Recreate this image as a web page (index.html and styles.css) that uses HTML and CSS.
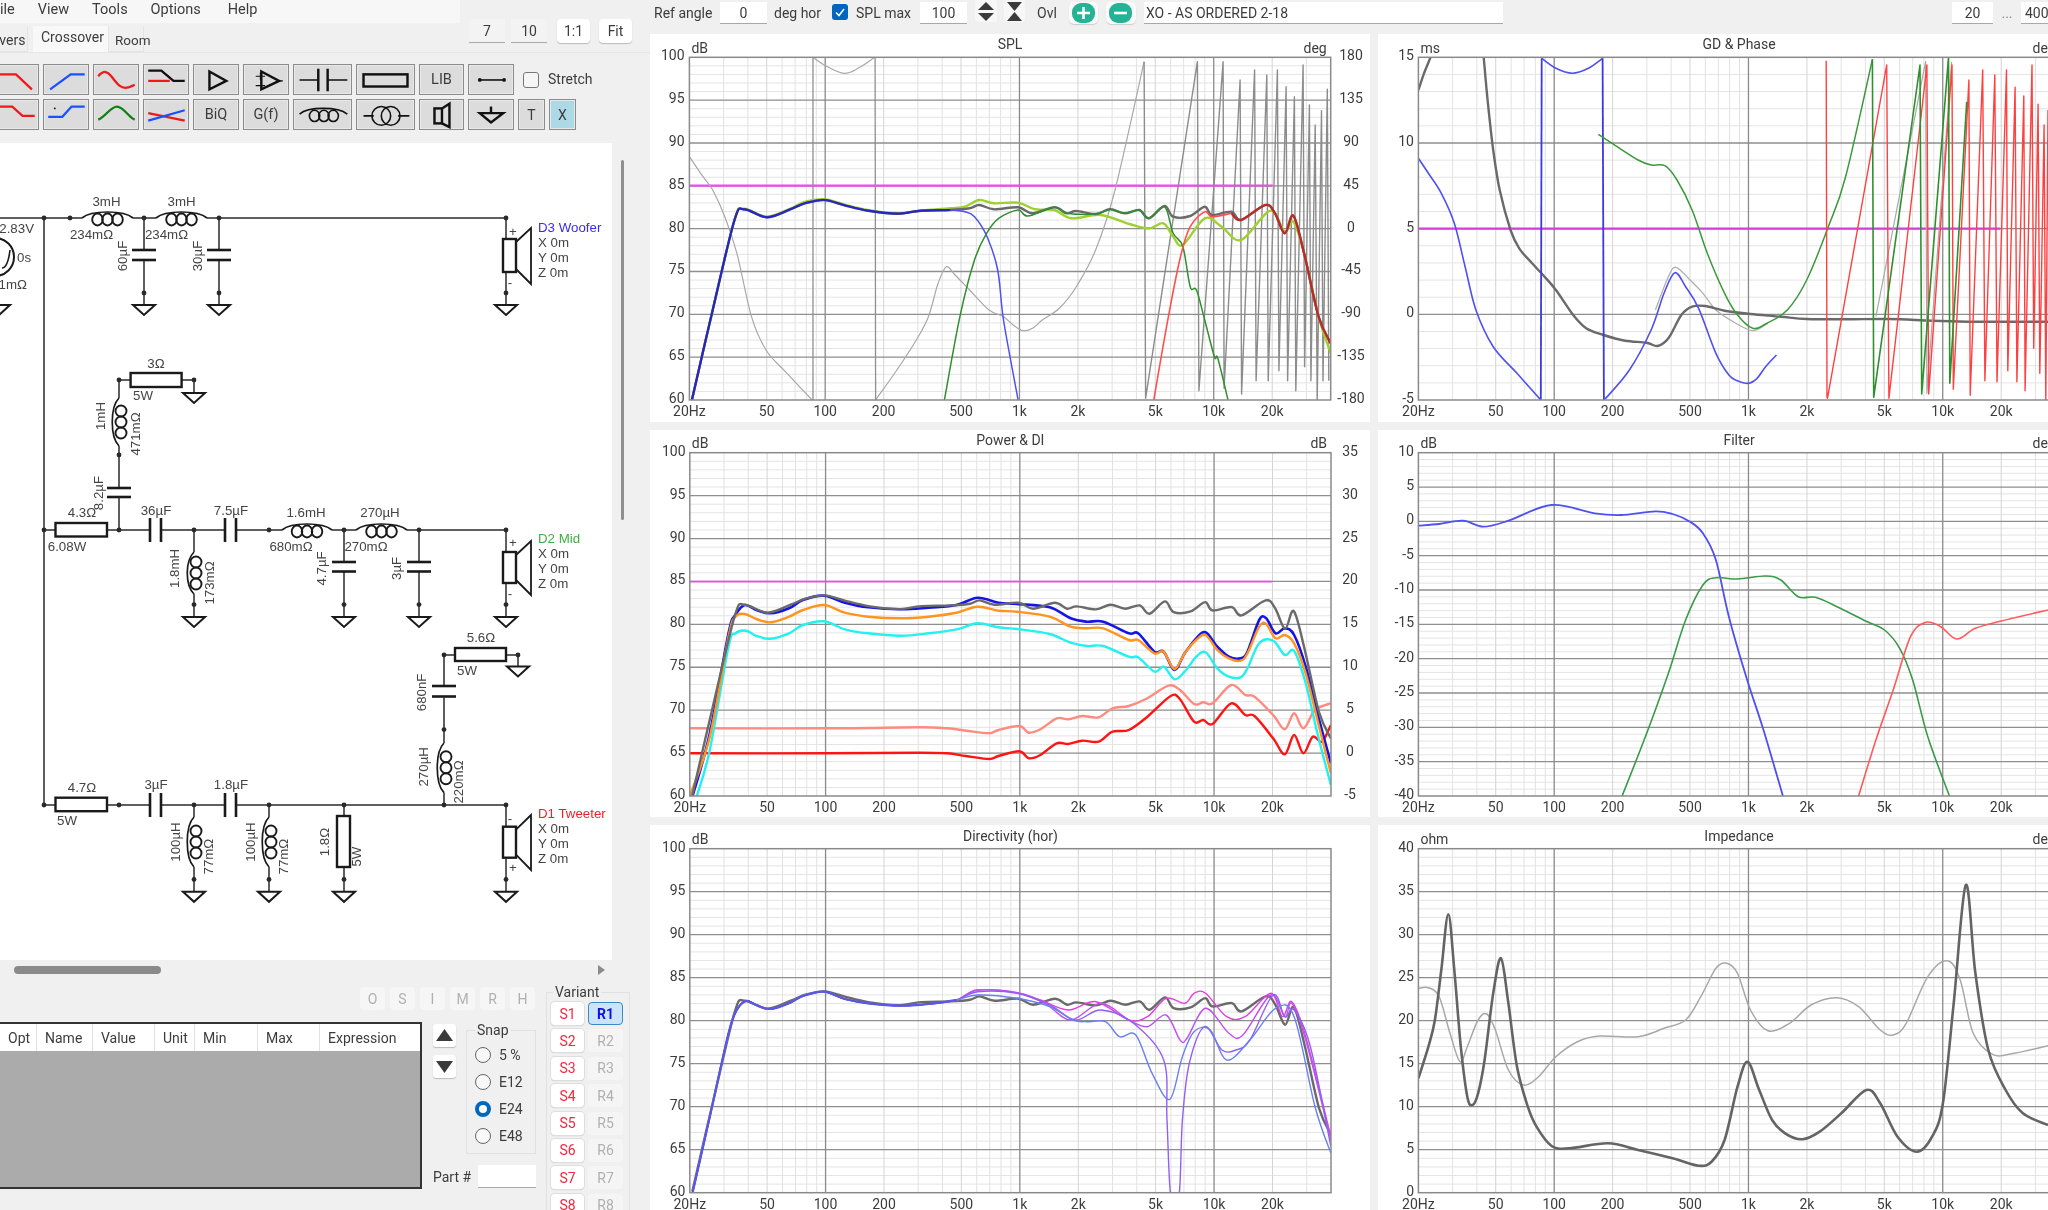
FILE: index.html
```html
<!DOCTYPE html>
<html lang="en">
<head>
<meta charset="utf-8">
<title>VituixCAD</title>
<link rel="stylesheet" href="styles.css">
</head>
<body>
<div class="app">
  <aside class="left">
    <header class="head">
      <div class="head-main">
        <nav class="menu"><span>File</span><span>View</span><span>Tools</span><span>Options</span><span>Help</span></nav>
        <div class="tabs"><span class="tab tab-drivers">Drivers</span><span class="tab tab-active">Crossover</span><span class="tab">Room</span></div>
      </div>
      <div class="zoom-btns">
        <span class="field zoom-field">7</span><span class="field zoom-field">10</span>
        <span class="zoom-btn">1:1</span><span class="zoom-btn">Fit</span>
      </div>
    </header>

    <div class="toolbar">
      <div class="tool-row">
        <button class="tool"><svg viewBox="0 0 46 31"><polyline class="ico red" points="3,10 23,10 40,26"/></svg></button>
        <button class="tool"><svg viewBox="0 0 46 31"><polyline class="ico blue" points="6,26 28,10 43,10"/></svg></button>
        <button class="tool"><svg viewBox="0 0 46 31"><path class="ico red" d="M4,12C10,5 14,7 18,12C24,20 28,26 36,24C39,23 41,22 43,21"/></svg></button>
        <button class="tool"><svg viewBox="0 0 46 31"><polyline class="ico blk" points="4,6 18,6 31,17 43,17"/><line class="ico red" x1="4" y1="17" x2="27" y2="17"/></svg></button>
        <button class="tool"><svg viewBox="0 0 46 31"><polygon class="ico blk" points="16,7 16,26 34,17"/></svg></button>
        <button class="tool"><svg viewBox="0 0 46 31"><polygon class="ico blk" points="18,7 18,26 37,17"/><path class="ico thin" d="M12,12H22M17,8V16M12,22H22M37,17H41"/></svg></button>
        <button class="tool tool-wide"><svg viewBox="0 0 59 31"><path class="ico blk-t" d="M5,16H25M35,16H56"/><path class="ico blk" d="M25,4V28M35,4V28"/></svg></button>
        <button class="tool tool-wide"><svg viewBox="0 0 59 31"><rect class="ico blk" x="6" y="10" width="47" height="13"/></svg></button>
        <button class="tool tool-text">LIB</button>
        <button class="tool"><svg viewBox="0 0 46 31"><path class="ico blk-t" d="M11,16H37"/><circle class="fill-blk" cx="11" cy="16" r="2"/><circle class="fill-blk" cx="37" cy="16" r="2"/></svg></button>
        <span class="check"></span><span class="stretch">Stretch</span>
      </div>
      <div class="tool-row">
        <button class="tool"><svg viewBox="0 0 46 31"><polyline class="ico red" points="3,7 19,7 30,17 43,17"/></svg></button>
        <button class="tool"><svg viewBox="0 0 46 31"><polyline class="ico blue" points="4,18 19,18 29,7 43,7"/><circle class="fill-blk" cx="11" cy="9" r="1"/></svg></button>
        <button class="tool"><svg viewBox="0 0 46 31"><path class="ico green" d="M4,21C12,18 17,7 24,7C31,7 36,18 43,21"/></svg></button>
        <button class="tool"><svg viewBox="0 0 46 31"><line class="ico red" x1="4" y1="14" x2="43" y2="22"/><line class="ico blue" x1="4" y1="22" x2="43" y2="11"/></svg></button>
        <button class="tool tool-text">BiQ</button>
        <button class="tool tool-text">G(f)</button>
        <button class="tool tool-wide"><svg viewBox="0 0 59 31"><path class="ico blk-t" d="M5,15C14,7 46,7 56,15"/><ellipse class="ico blk-t" cx="21" cy="17" rx="5.5" ry="6"/><ellipse class="ico blk-t" cx="31" cy="17" rx="5.5" ry="6"/><ellipse class="ico blk-t" cx="41" cy="17" rx="5.5" ry="6"/></svg></button>
        <button class="tool tool-wide"><svg viewBox="0 0 59 31"><path class="ico blk-t" d="M6,17H17M43,17H55"/><circle class="ico blk-t" cx="25" cy="17" r="10"/><circle class="ico blk-t" cx="35" cy="17" r="10"/></svg></button>
        <button class="tool"><svg viewBox="0 0 45 31"><rect class="ico blk" x="15" y="9" width="8" height="16"/><polyline class="ico blk" points="23,9 31,4 31,29 23,25"/></svg></button>
        <button class="tool"><svg viewBox="0 0 46 31"><path class="ico blk" d="M23,7V14"/><polygon class="ico blk" points="11,14 36,14 23,24"/></svg></button>
        <button class="tool tool-t">T</button>
        <button class="tool tool-t tool-x">X</button>
      </div>
    </div>

    <div class="schem-row">
      <div class="schem" id="schem"></div>
      <div class="vscroll"><span class="vthumb"></span></div>
    </div>
    <div class="hscroll"><span class="hthumb"></span><span class="harrow"></span></div>

    <div class="bottom">
      <div class="bottom-main">
        <div class="flags"><span>O</span><span>S</span><span>I</span><span>M</span><span>R</span><span>H</span></div>
        <div class="edit-row">
          <div class="table">
            <div class="thead">
              <span class="c-opt">Opt</span><span class="c-name">Name</span><span class="c-val">Value</span><span class="c-unit">Unit</span><span class="c-min">Min</span><span class="c-max">Max</span><span class="c-exp">Expression</span>
            </div>
          </div>
          <div class="side">
            <div class="side-top">
              <div class="arrows">
                <span class="arrow-btn"><svg viewBox="0 0 23 23"><polygon class="fill-dark" points="11.5,5 20,17 3,17"/></svg></span>
                <span class="arrow-btn"><svg viewBox="0 0 23 23"><polygon class="fill-dark" points="3,6 20,6 11.5,18"/></svg></span>
              </div>
              <fieldset class="snap">
                <legend>Snap</legend>
                <div class="radio"><i></i>5 %</div>
                <div class="radio"><i></i>E12</div>
                <div class="radio on"><i></i>E24</div>
                <div class="radio"><i></i>E48</div>
              </fieldset>
            </div>
            <div class="part"><span class="part-label">Part #</span><span class="field part-field"></span></div>
          </div>
        </div>
      </div>
      <fieldset class="variant">
        <legend>Variant</legend>
        <div class="var-grid">
          <span class="vs">S1</span><span class="vr vr-on">R1</span>
          <span class="vs">S2</span><span class="vr">R2</span>
          <span class="vs">S3</span><span class="vr">R3</span>
          <span class="vs">S4</span><span class="vr">R4</span>
          <span class="vs">S5</span><span class="vr">R5</span>
          <span class="vs">S6</span><span class="vr">R6</span>
          <span class="vs">S7</span><span class="vr">R7</span>
          <span class="vs">S8</span><span class="vr">R8</span>
        </div>
      </fieldset>
    </div>
  </aside>

  <main class="right">
    <div class="topbar">
      <span class="t-ref">Ref angle</span>
      <span class="field t-num">0</span>
      <span class="t-deg">deg hor</span>
      <span class="tick"><svg viewBox="0 0 16 16"><path class="tick-mark" d="M4,8.5L7,11.5L12,5"/></svg></span>
      <span class="t-spl">SPL max</span>
      <span class="field t-num t-num2">100</span>
      <span class="spin"><svg viewBox="0 0 22 23"><polygon class="fill-dark" points="11,2 19,10 3,10"/><polygon class="fill-dark" points="3,13 19,13 11,21"/></svg></span>
      <span class="spin spin2"><svg viewBox="0 0 21 23"><polygon class="fill-dark" points="3,2 18,2 10.5,11"/><polygon class="fill-dark" points="10.5,12 18,21 3,21"/></svg></span>
      <span class="t-ovl">Ovl</span>
      <span class="round-btn"><svg viewBox="0 0 29 22"><rect class="fill-teal" x="3" y="1" width="23" height="20" rx="9"/><path class="round-mark" d="M14.5,5V17M8,11H21"/></svg></span>
      <span class="round-btn round-btn2"><svg viewBox="0 0 29 22"><rect class="fill-teal" x="3" y="1" width="23" height="20" rx="9"/><path class="round-mark" d="M8,11H21"/></svg></span>
      <span class="field t-name">XO - AS ORDERED 2-18</span>
      <span class="field t-from">20</span>
      <span class="t-dots">...</span>
      <span class="field t-to">400</span>
    </div>
    <div class="charts">
      <section class="panel" id="spl"></section>
      <section class="panel" id="gd"></section>
      <section class="panel" id="power"></section>
      <section class="panel" id="filter"></section>
      <section class="panel" id="dir"></section>
      <section class="panel" id="imp"></section>
    </div>
  </main>
</div>
<script src="script.js"></script>
</body>
</html>
```
FILE: styles.css
```css
* { box-sizing: border-box; }
html, body { margin: 0; padding: 0; background: #f0f0f0; }
.app {
  display: flex; width: 2048px; height: 1210px; overflow: hidden;
  background: #f0f0f0; color: #3c3c3c;
  font: 14px Roboto, "Liberation Sans", sans-serif;
  filter: blur(0.45px);
}
.field { background: #fff; border-bottom: 1.5px solid #a8a8a8; display: flex; align-items: center; justify-content: center; }

/* left column */
.left { width: 650px; flex: none; display: flex; flex-direction: column; overflow: hidden; }
.head { display: flex; height: 52px; }
.head-main { width: 460px; flex: none; }
.menu { height: 23px; background: #f7f7f7; display: flex; gap: 23px; margin-left: -8px; padding-top: 1px; font-size: 14.5px; overflow: visible; }
.menu span:last-child { margin-left: 4px; }
.tabs { display: flex; height: 29px; padding-top: 4px; align-items: stretch; margin-left: -23px; }
.tab { padding: 5px 6px 0; background: #f0f0f0; border-right: 1px solid #e4e4e4; }
.tab-drivers { width: 51px; padding-left: 5px; border-bottom: 1px solid #e4e4e4; }
.tab-active { background: #f8f8f8; width: 76px; margin-left: 5px; margin-top: -1px; padding: 3px 0 0 8px; }
.tabs .tab:last-child { width: 35px; padding-left: 6px; padding-right: 0; padding-top: 5px; font-size: 13.5px; border-bottom: 1px solid #e4e4e4; }
.zoom-btns { display: flex; padding-top: 19px; margin-left: 9px; height: 43px; }
.zoom-field { width: 36px; height: 24px; margin-right: 6px; background: #f3f3f3; }
.zoom-btn { width: 33px; height: 24px; margin-left: 4px; margin-right: 5px; background: #fff; border-radius: 4px; box-shadow: 0 1px 1px #bbb; display: flex; align-items: center; justify-content: center; }

.toolbar { height: 91px; padding-top: 11px; margin-left: -7px; display: flex; flex-direction: column; gap: 4px; border-top: 1px solid #e6e6e6; }
.tool-row { display: flex; gap: 4px; height: 31px; }
.tool { width: 46px; height: 31px; padding: 0; margin: 0; background: #dcdcdc; border: 1px solid #8c8c8c; box-shadow: inset 0 0 0 1px #e8e8e8; font: inherit; color: #3c3c3c; display: flex; align-items: center; justify-content: center; flex: none; }
.tool svg { width: 100%; height: 100%; display: block; }
.tool-wide { width: 59px; }
.tool-row .tool:nth-child(9) { width: 45px; }
.tool-text { font-size: 14.5px; }
.tool-t { width: 27px; }
.tool-x { background: #add8e6; }
.ico { fill: none; stroke-width: 2.4; }
.red { stroke: #f01818; }
.blue { stroke: #1a50ff; }
.green { stroke: #108010; }
.blk { stroke: #111; stroke-width: 2.6; }
.blk-t { stroke: #111; stroke-width: 1.7; }
.thin { stroke: #111; stroke-width: 1.2; }
.fill-blk { fill: #111; }
.fill-dark { fill: #3a3a3a; }
.fill-teal { fill: #24b394; }
.check { width: 16px; height: 16px; border: 1px solid #777; border-radius: 3px; background: #f6f6f6; margin: 8px 0 0 5px; flex: none; }
.stretch { margin: 7px 0 0 5px; }

.schem-row { display: flex; height: 817px; }
.schem { width: 612px; height: 817px; background: #fff; flex: none; overflow: hidden; }
.schem svg { display: block; width: 612px; height: 817px; }
.vscroll { width: 38px; padding: 17px 0 0 8.5px; }
.vthumb { display: block; width: 3px; height: 360px; background: #8f8f8f; border-radius: 2px; }
.hscroll { height: 27px; display: flex; align-items: flex-start; padding: 6px 0 0 13.5px; }
.hthumb { width: 147px; height: 8px; background: #8a8a8a; border-radius: 4px; }
.harrow { width: 0; height: 0; margin: -1px 0 0 437px; border-left: 7px solid #8a8a8a; border-top: 5.5px solid transparent; border-bottom: 5.5px solid transparent; }

.bottom { display: flex; height: 223px; }
.bottom-main { width: 546px; flex: none; }
.flags { display: flex; justify-content: flex-end; gap: 5px; padding-right: 11px; height: 23px; }
.flags span { width: 25px; height: 23px; background: #f6f6f6; border-radius: 4px; color: #b0b0b0; display: flex; align-items: center; justify-content: center; }
.edit-row { display: flex; margin-top: 12px; }
.table { width: 424px; height: 167px; margin-left: -2px; flex: none; border: 2px solid #333; background: #ababab; }
.thead { display: flex; height: 27px; background: #fff; align-items: center; }
.thead span { padding-left: 8px; border-right: 1px solid #e2e2e2; height: 100%; display: flex; align-items: center; }
.c-opt { width: 37px; }
.c-name { width: 56px; }
.c-val { width: 62px; }
.c-unit { width: 40px; }
.c-min { width: 63px; }
.c-max { width: 62px; }
.thead .c-exp { flex: 1; border-right: 0; }
.side { margin-left: 11px; width: 103px; flex: none; }
.side-top { display: flex; height: 132px; }
.arrows { width: 23px; padding-top: 2px; display: flex; flex-direction: column; gap: 8px; flex: none; }
.arrow-btn { width: 23px; height: 23px; background: #fff; border-radius: 3px; box-shadow: 0 1px 1px #bbb; display: block; }
.arrow-btn svg { display: block; }
.snap { margin: 1px 0 0 10px; padding: 0; width: 71px; height: 131px; border: 1px solid #e0e0e0; position: relative; min-width: 0; }
legend { padding: 0 2px; margin-left: 8px; line-height: 14px; }
.variant legend { margin-left: 2px; }
.radio { height: 27px; display: flex; align-items: center; padding-left: 8px; gap: 8px; }
.radio:first-of-type { margin-top: 4px; }
.radio i { width: 16px; height: 16px; border: 1.5px solid #666; border-radius: 50%; background: #f8f8f8; flex: none; }
.radio.on i { border: 4.5px solid #0067c0; background: #fff; }
.part { display: flex; align-items: center; margin-top: 11px; }
.part-label { width: 37px; flex: none; white-space: nowrap; }
.part-field { width: 58px; height: 23px; margin-left: 8px; flex: none; }
.variant { width: 84px; height: 240px; margin: 0; padding: 0 0 0 4px; border: 1px solid #e0e0e0; min-width: 0; flex: none; margin-top: -2px; }
.var-grid { display: grid; grid-template-columns: 33px 35px; column-gap: 4px; row-gap: 4.4px; margin-top: 3px; }
.var-grid span { height: 23px; border-radius: 4px; display: flex; align-items: center; justify-content: center; }
.vs { background: #fff; color: #f02840; box-shadow: 0 0 0 1px #dedede, 0 1px 1px #bbb; }
.vr { background: #f5f5f5; color: #b0b0b0; }
.var-grid .vr-on { background: #cce4f7; color: #1010e0; border: 1.5px solid #3a8ac8; font-weight: 700; }

/* right column */
.right { flex: 1; min-width: 0; display: flex; flex-direction: column; overflow: hidden; }
.topbar { height: 34px; display: flex; align-items: flex-start; white-space: nowrap; flex: none; }
.topbar > span { height: 22px; display: flex; align-items: center; flex: none; margin-top: 2px; }
.t-ref { margin-left: 4px; width: 66px; }
.t-num { width: 47px; }
.t-num2 { margin-left: 8px; }
.t-deg { margin-left: 7px; width: 51px; }
.tick { margin-left: 7px; width: 16px; }
.tick svg { width: 16px; height: 16px; background: #0067c0; border-radius: 3px; margin-top: -3px; }
.tick-mark { fill: none; stroke: #fff; stroke-width: 1.5; }
.t-spl { margin-left: 8px; width: 56px; }
.spin { margin-left: 8px; width: 22px; background: #f7f7f7; border-radius: 3px; }
.spin svg { width: 100%; height: 23px; }
.topbar .spin { margin-top: 0; }
.spin2 { margin-left: 7px; width: 21px; }
.t-ovl { margin-left: 12px; width: 21px; }
.round-btn { margin-left: 11px; width: 29px; background: #fafafa; border-radius: 5px; box-shadow: 0 1px 1px #ccc; }
.round-btn svg { width: 29px; height: 22px; }
.round-btn2 { margin-left: 8px; width: 30px; }
.round-mark { fill: none; stroke: #fff; stroke-width: 2.6; }
.t-name { margin-left: 8px; width: 359px; justify-content: flex-start !important; padding-left: 2px; }
.t-from { margin-left: 449px; width: 41px; }
.t-dots { width: 28px; justify-content: center; color: #888; }
.t-to { width: 60px; justify-content: flex-start !important; padding-left: 4px; }

.charts { display: grid; grid-template-columns: 720px 720px; grid-template-rows: 388px 387px 385px; gap: 8px; }
.panel { background: #fff; }
.panel svg { display: block; width: 720px; height: 100%; }
.tx { font: 14px Roboto, "Liberation Sans", sans-serif; fill: #3c3c3c; }
.sch { font: 13.3px "Liberation Sans", Arial, sans-serif; fill: #444; }
.sch-d3 { fill: #3a2bf0; }
.sch-d2 { fill: #3cb043; }
.sch-d1 { fill: #f02030; }
```
FILE: script.js
```javascript
const NS = 'http://www.w3.org/2000/svg';
function el(p, tag, attrs, text) {
  const e = document.createElementNS(NS, tag);
  for (const k in attrs) e.setAttribute(k, attrs[k]);
  if (text !== undefined) e.textContent = text;
  p.appendChild(e);
  return e;
}
function smooth(p) {
  let d = 'M' + p[0][0].toFixed(1) + ',' + p[0][1].toFixed(1);
  for (let i = 0; i < p.length - 1; i++) {
    const a = p[Math.max(i - 1, 0)], b = p[i], c = p[i + 1], e = p[Math.min(i + 2, p.length - 1)];
    d += 'C' + (b[0] + (c[0] - a[0]) / 6).toFixed(1) + ',' + (b[1] + (c[1] - a[1]) / 6).toFixed(1) + ' '
      + (c[0] - (e[0] - b[0]) / 6).toFixed(1) + ',' + (c[1] - (e[1] - b[1]) / 6).toFixed(1) + ' '
      + c[0].toFixed(1) + ',' + c[1].toFixed(1);
  }
  return d;
}
function poly(p) { return 'M' + p.map(q => q[0].toFixed(1) + ',' + q[1].toFixed(1)).join('L'); }

/* ---------- curve data, as read off the reference ---------- */
const total = [[107,1200],[150,930],[195,660],[215,628],[262,652],[310,628],[340,610],[380,600],[420,615],[470,632],[530,641],[580,632],[640,630],[680,625],[700,615],[730,628],[780,622],[810,640],[855,622],[880,640],[900,633],[940,642],[970,628],[1000,640],[1030,630],[1050,655],[1082,618],[1100,650],[1135,648],[1165,620],[1180,645],[1220,635],[1240,660],[1290,615],[1310,640],[1330,700],[1348,647],[1370,760],[1400,950],[1425,1030]];
const SPL = [2.063, 640, 0], GDZ = [2.3127, 1370, 0], POW = [2.148, 640, 420], FIL = [2.3127, 1370, 420], DIR = [2.148, 640, 820], IMP = [2.3127, 1370, 820];
const toPage = (z, pts) => pts.map(q => [z[1] + q[0] / z[0], z[2] + q[1] / 3]);
const totalPage = toPage(SPL, total);

const base = [[113,1118],[150,890],[190,640],[208,570],[228,543],[250,555],[280,567],[320,550],[350,528],[395,515],[440,537],[490,550],[560,557],[620,552],[680,540]];

const charts = {
  spl: { box: [650, 34, 720, 388], plot: [689.4, 57.3, 641.3, 342.7], z: SPL, title: 'SPL', lu: 'dB', ru: 'deg',
    left: [100,95,90,85,80,75,70,65,60], right: [180,135,90,45,0,-45,-90,-135,-180], labelEnd: 684.6, rightX: 1351,
    hline: { y: 557, x0: 102, x1: 1305, w: 2.2, c: '#f048f0' },
    curves: [
      { c: '#a8a8a8', w: 1.2, p: [[102,470],[130,530],[150,570],[175,650],[200,760],[230,950],[260,1050],[300,1115],[355,1200]] },
      { c: '#a8a8a8', w: 1.2, p: [[357,172],[380,195],[420,220],[450,205],[484,172]] },
      { c: '#a8a8a8', w: 1.2, p: [[486,1200],[530,1110],[570,1020],[595,950],[615,850],[632,800],[650,825],[680,870],[720,930],[750,950],[770,975],[790,992],[810,985],[830,960],[865,925],[900,860],[940,750],[980,570],[1040,185]] },
      { c: '#909090', w: 1.3, straight: 1, p: [[357,1200],[357,172]] },
      { c: '#909090', w: 1.3, straight: 1, p: [[485,172],[486,1200]] },
      { c: '#8c8c8c', w: 1.4, straight: 1, p: [[1040,185],[1043,1195],[1150,185],[1153,1172],[1203,185],[1205,1165],[1238,240],[1241,1182],[1268,210],[1271,1142],[1293,225],[1296,1142],[1315,210],[1318,1112],[1333,260],[1336,1142],[1350,290],[1353,1172],[1368,195],[1371,1100],[1381,315],[1384,1142],[1393,375],[1397,1200],[1406,332],[1409,1142],[1418,268],[1421,1142]] },
      { c: '#a0d030', w: 2.4, p: [[107,1200],[150,930],[195,660],[215,626],[262,650],[310,626],[340,606],[380,598],[420,613],[470,630],[530,640],[580,632],[640,625],[670,620],[700,600],[730,610],[780,608],[815,628],[855,630],[890,655],[950,645],[1010,672],[1050,685],[1080,670],[1100,710],[1120,735],[1165,655],[1200,680],[1240,720],[1300,632],[1330,695],[1348,665],[1370,760],[1400,950],[1425,1060]] },
      { page: totalPage, c: '#6a6a6a', w: 2.4 },
      { c: '#2f8f2f', w: 1.5, p: [[628,1200],[660,950],[690,780],[715,700],[740,655],[780,630],[800,648],[855,622],[880,640],[940,642],[970,628],[1000,640],[1030,630],[1050,655],[1082,620],[1100,700],[1120,740],[1135,860],[1148,870],[1165,960],[1185,1070],[1192,1075],[1213,1200]] },
      { c: '#ff5050', w: 1.6, p: [[1060,1200],[1090,950],[1115,770],[1135,680],[1165,635],[1180,650],[1220,640]] },
      { c: '#c02828', w: 2.2, p: [[1220,640],[1240,660],[1290,615],[1310,640],[1330,700],[1348,647],[1370,760],[1400,950],[1425,1030]] },
      { c: '#5050f0', w: 1.5, p: [[640,630],[670,635],[690,650],[716,710],[738,810],[750,960],[780,1200]] },
      { c: '#2626c0', w: 2.2, p: [[107,1200],[150,930],[195,660],[215,628],[262,652],[310,628],[340,610],[380,600],[420,615],[470,632],[530,641],[580,632],[640,630]] }
    ] },
  gd: { box: [1378, 34, 720, 388], plot: [1418.4, 57.3, 641.3, 342.7], z: GDZ, title: 'GD & Phase', lu: 'ms', ru: 'deg',
    left: [15,10,5,0,-5], labelEnd: 1414,
    hline: { y: 686, x0: 112, x1: 1458, w: 2.4, c: '#d040d8' },
    curves: [
      { c: '#6a6a6a', w: 2.4, p: [[112,270],[125,220],[140,172]] },
      { c: '#b0b0b0', w: 1.3, p: [[660,930],[690,830],[708,802],[740,840],[770,880],[800,930],[840,965],[885,992],[920,970]] },
      { c: '#6a6a6a', w: 2.4, p: [[263,172],[272,300],[285,450],[300,570],[325,690],[345,745],[375,790],[400,825],[430,870],[470,945],[500,985],[540,1005],[590,1022],[640,1028],[665,1038],[690,1015],[720,945],[745,920],[775,918],[820,932],[880,942],[950,950],[1010,957],[1100,958],[1200,957],[1300,962],[1400,965],[1568,965]] },
      { c: '#5050f0', w: 1.6, p: [[112,475],[135,520],[165,580],[195,670],[220,800],[245,930],[285,1040],[340,1120],[395,1200]] },
      { c: '#3a3ae0', w: 1.8, straight: 1, p: [[395,1200],[397,175]] },
      { c: '#5050f0', w: 1.6, p: [[397,175],[430,205],[468,220],[505,205],[538,175]] },
      { c: '#3a3ae0', w: 1.8, straight: 1, p: [[538,175],[541,1200]] },
      { c: '#5050f0', w: 1.6, p: [[543,1198],[600,1110],[650,990],[680,880],[705,818],[730,860],[760,925],[800,1060],[830,1125],[850,1142],[875,1150],[895,1135],[915,1100],[940,1065]] },
      { c: '#3a9a3a', w: 1.5, p: [[528,403],[560,430],[620,480],[650,495],[682,497],[710,540],[745,630],[780,760],[820,880],[850,945],[885,985],[915,972],[965,930],[1010,840],[1060,680],[1100,530],[1162,178]] },
      { c: '#a8a8a8', w: 1.2, straight: 1, p: [[1170,950],[1285,185],[1288,1180],[1345,185]] },
      { c: '#ff4040', w: 1.4, straight: 1, p: [[1055,182],[1057,1192],[1058,1195],[1195,195],[1200,1195],[1288,195],[1292,1182],[1346,195],[1349,1168],[1385,240],[1388,1186],[1417,210],[1422,1142],[1445,225],[1450,1145],[1472,210],[1475,1112],[1492,262],[1496,1145],[1512,288],[1515,1172],[1531,195],[1535,1045],[1545,313],[1549,1120],[1559,375],[1563,1200],[1568,330]] },
      { c: '#2f8f2f', w: 1.6, straight: 1, p: [[1162,178],[1165,1192],[1272,195],[1276,1182],[1338,172],[1341,1150],[1380,305]] }
    ] },
  power: { box: [650, 430, 720, 387], plot: [689.8, 452.7, 641.2, 343.3], z: POW, title: 'Power & DI', lu: 'dB', ru: 'dB',
    left: [100,95,90,85,80,75,70,65,60], right: [35,30,25,20,15,10,5,0,-5], labelEnd: 685.5, rightX: 1350,
    hline: { y: 485, x0: 107, x1: 1357, w: 1.8, c: '#f048f0' },
    curves: [
      { c: '#ff8a80', w: 2.4, p: [[107,925],[400,925],[600,922],[660,925],[700,932],[750,940],[770,930],[815,918],[835,938],[860,928],[895,895],[920,898],[950,888],[985,892],[1015,865],[1050,858],[1090,835],[1135,797],[1160,810],[1190,852],[1210,847],[1230,850],[1270,795],[1300,825],[1320,830],[1360,885],[1385,928],[1405,880],[1425,925],[1450,870],[1484,850]] },
      { c: '#ff1414', w: 2.4, p: [[107,1000],[400,1000],[600,998],[660,1000],[700,1008],[750,1017],[770,1008],[815,994],[835,1015],[860,1005],[895,970],[920,972],[950,962],[985,965],[1015,935],[1050,930],[1090,890],[1140,828],[1160,838],[1190,905],[1210,900],[1230,912],[1270,850],[1300,885],[1320,888],[1360,955],[1385,1003],[1405,945],[1425,1000],[1445,950],[1465,965],[1484,915]] },
      { c: '#1414e8', w: 2.6, p: [[113,1128],[150,940],[190,640],[205,585],[225,555],[250,570],[280,580],[320,565],[350,540],[395,527],[440,548],[490,562],[560,568],[620,563],[680,555],[725,533],[770,548],[810,552],[880,562],[925,595],[960,605],[995,605],[1050,640],[1070,640],[1105,695],[1125,695],[1148,750],[1170,700],[1195,655],[1215,637],[1240,680],[1265,710],[1290,715],[1305,695],[1330,600],[1345,595],[1365,640],[1385,625],[1405,645],[1430,740],[1455,880],[1484,1030]] },
      { c: '#24f0f0', w: 2.4, p: [[122,1128],[150,990],[190,680],[205,640],[228,632],[250,648],[280,656],[320,640],[350,615],[395,604],[440,628],[490,640],[560,647],[620,640],[680,628],[725,610],[770,622],[810,627],[880,642],[925,668],[960,678],[995,678],[1050,710],[1070,712],[1105,755],[1125,740],[1148,778],[1170,755],[1195,710],[1215,697],[1240,745],[1265,770],[1290,772],[1305,745],[1330,670],[1360,662],[1385,705],[1405,693],[1430,790],[1455,940],[1484,1095]] },
      { c: '#ff9420', w: 2.4, p: [[107,1128],[150,950],[190,650],[205,590],[225,582],[250,597],[280,607],[320,590],[350,570],[395,555],[440,578],[490,590],[560,595],[620,590],[680,578],[725,560],[770,572],[810,575],[880,590],[925,620],[960,625],[995,625],[1050,660],[1070,660],[1105,700],[1125,695],[1148,748],[1170,700],[1195,660],[1215,645],[1240,690],[1265,715],[1290,722],[1305,700],[1330,620],[1345,612],[1365,655],[1385,645],[1405,670],[1430,760],[1455,900],[1484,1060]] },
      { shared: 1, c: '#6a6a6a', w: 2.4 }
    ] },
  filter: { box: [1378, 430, 720, 387], plot: [1418.4, 452.7, 641.3, 343.3], z: FIL, title: 'Filter', lu: 'dB', ru: 'deg',
    left: [10,5,0,-5,-10,-15,-20,-25,-30,-35,-40], labelEnd: 1414,
    curves: [
      { c: '#5050f0', w: 1.8, p: [[112,317],[160,312],[215,302],[262,320],[320,302],[420,255],[520,280],[580,285],[660,274],[700,282],[740,305],[770,340],[800,420],[830,590],[870,770],[910,930],[955,1128]] },
      { c: '#3a9a4a', w: 1.6, p: [[583,1128],[640,940],[690,760],[730,600],[770,495],[800,473],[850,477],[915,468],[950,480],[990,530],[1030,532],[1080,560],[1150,605],[1190,630],[1225,685],[1255,780],[1290,950],[1340,1128]] },
      { c: '#ff5a5a', w: 1.6, p: [[1130,1128],[1170,960],[1210,810],[1250,650],[1285,607],[1320,620],[1357,657],[1400,625],[1460,603],[1568,570]] }
    ] },
  dir: { box: [650, 825, 720, 385], plot: [689.8, 848.7, 641.2, 344], z: DIR, title: 'Directivity (hor)', lu: 'dB',
    left: [100,95,90,85,80,75,70,65,60], labelEnd: 685.5,
    curves: [
      { shared: 1, c: '#6a6a6a', w: 2.4 },
      { c: '#e040e0', w: 1.4, p: base.concat([[725,510],[810,518],[860,540],[920,570],[980,545],[1050,600],[1090,590],[1130,535],[1170,550],[1190,520],[1215,520],[1260,590],[1300,590],[1355,520],[1380,590],[1400,545],[1430,650],[1484,950]]) },
      { c: '#c050f0', w: 1.4, p: base.concat([[725,510],[810,518],[870,550],[925,600],[990,550],[1050,600],[1090,620],[1130,585],[1160,660],[1175,655],[1215,565],[1265,640],[1295,645],[1355,525],[1385,590],[1400,550],[1430,660],[1484,960]]) },
      { c: '#9060f0', w: 1.4, p: base.concat([[725,515],[810,520],[880,555],[935,600],[990,570],[1060,610],[1125,720],[1132,900],[1140,1125],[1158,1125],[1165,900],[1180,730],[1213,620],[1250,690],[1280,690],[1310,660],[1360,525],[1385,590],[1405,570],[1440,680],[1484,980]]) },
      { c: '#6a80f0', w: 1.4, p: base.concat([[725,525],[810,535],[880,560],[930,600],[960,605],[1000,605],[1030,650],[1065,645],[1100,760],[1138,838],[1165,710],[1190,635],[1225,630],[1260,720],[1310,660],[1365,565],[1405,590],[1450,860],[1484,1000]]) },
      { c: '#5858e0', w: 2.2, p: base }
    ] },
  imp: { box: [1378, 825, 720, 385], plot: [1418.4, 848.7, 641.3, 344], z: IMP, title: 'Impedance', lu: 'ohm', ru: 'deg',
    left: [40,35,30,25,20,15,10,5,0], labelEnd: 1414,
    curves: [
      { c: '#a8a8a8', w: 1.5, p: [[112,505],[135,503],[160,530],[185,640],[208,725],[225,680],[250,600],[270,582],[290,630],[320,750],[355,795],[390,770],[430,710],[480,665],[530,648],[620,650],[680,625],[730,600],[765,530],[800,445],[825,430],[850,460],[880,570],[920,632],[970,610],[1020,555],[1080,533],[1130,560],[1180,630],[1210,645],[1240,610],[1290,470],[1335,422],[1365,480],[1395,640],[1440,703],[1490,700],[1568,677]] },
      { c: '#646464', w: 2.6, p: [[112,775],[135,680],[150,600],[165,450],[181,283],[195,450],[210,680],[225,830],[237,855],[250,820],[265,720],[285,520],[303,415],[320,550],[340,740],[365,860],[385,920],[420,978],[460,985],[550,970],[620,990],[700,1015],[760,1037],[790,1025],[820,960],[850,800],[873,725],[900,810],[930,900],[960,940],[1000,958],[1040,935],[1090,880],[1148,810],[1180,850],[1220,950],[1265,995],[1300,950],[1325,850],[1350,550],[1378,195],[1400,460],[1430,690],[1470,810],[1510,880],[1568,915]] }
    ] }
};

const xLabels = [[20,'20Hz'],[50,'50'],[100,'100'],[200,'200'],[500,'500'],[1000,'1k'],[2000,'2k'],[5000,'5k'],[10000,'10k'],[20000,'20k']];

function drawChart(id, ch, idx) {
  const [bx, by, bw, bh] = ch.box, [px, py, pw, ph] = ch.plot;
  const svg = el(document.getElementById(id), 'svg', { viewBox: `${bx} ${by} ${bw} ${bh}`, preserveAspectRatio: 'xMinYMin' });
  const X = f => px + Math.log10(f / 20) * pw / Math.log10(2000);
  const g = el(svg, 'g', {});
  const line = (x1, y1, x2, y2, c, w) => el(g, 'line', { x1, y1, x2, y2, stroke: c, 'stroke-width': w });

  const majors = ch.left.length - 1, minors = majors * 5;
  for (let i = 1; i < minors; i++) {
    if (i % 5) { const y = py + ph * i / minors; line(px, y, px + pw, y, '#e4e4e4', 1); }
  }
  for (const d of [10, 100, 1000, 10000]) {
    for (let m = 1; m <= 9; m++) {
      const f = d * m;
      if (f <= 20 || f >= 40000 || m === 1) continue;
      line(X(f), py, X(f), py + ph, (m === 2 || m === 5) ? '#d4d4d4' : '#e2e2e2', 1);
    }
  }
  for (let i = 1; i < majors; i++) { const y = py + ph * i / majors; line(px, y, px + pw, y, '#8e8e8e', 1.3); }
  for (const f of [100, 1000, 10000]) line(X(f), py, X(f), py + ph, '#8a8a8a', 1.3);

  if (ch.hline) {
    const z = ch.z, h = ch.hline;
    line(z[1] + h.x0 / z[0], z[2] + h.y / 3, z[1] + h.x1 / z[0], z[2] + h.y / 3, h.c, h.w);
  }

  const clipId = 'clip' + idx;
  const cp = el(el(svg, 'defs', {}), 'clipPath', { id: clipId });
  el(cp, 'rect', { x: px, y: py, width: pw, height: ph });
  const cg = el(svg, 'g', { 'clip-path': `url(#${clipId})` });
  for (const c of ch.curves) {
    let pts;
    if (c.page) pts = c.page;
    else if (c.shared) { const o = charts.spl.plot; pts = totalPage.map(q => [q[0] - o[0] + px, q[1] - o[1] + py]); }
    else pts = toPage(ch.z, c.p);
    el(cg, 'path', { d: c.straight ? poly(pts) : smooth(pts), fill: 'none', stroke: c.c, 'stroke-width': c.w, 'stroke-linejoin': 'round' });
  }
  el(svg, 'rect', { x: px, y: py, width: pw, height: ph, fill: 'none', stroke: '#8a8a8a', 'stroke-width': 1.5 });

  const t = (x, y, s, anchor) => el(svg, 'text', { x, y, class: 'tx', 'text-anchor': anchor || 'middle', 'dominant-baseline': 'central' }, s);
  t(px + pw / 2, py - 13, ch.title);
  t(px + 2, py - 9.5, ch.lu, 'start');
  if (ch.ru) t(px + pw - 4, py - 9.5, ch.ru, 'end');
  ch.left.forEach((v, i) => t(ch.labelEnd, py + ph * i / majors - 2, String(v), 'end'));
  if (ch.right) ch.right.forEach((v, i) => t(ch.rightX, py + ph * i / majors - 2, String(v)));
  xLabels.forEach(([f, s]) => t(X(f), py + ph + 11, s));
}
Object.keys(charts).forEach((id, i) => drawChart(id, charts[id], i));

/* ---------- schematic ---------- */
(function () {
  const svg = el(document.getElementById('schem'), 'svg', { viewBox: '0 143 612 817' });
  const W = '#2a2a2a';
  const wire = (x1, y1, x2, y2) => el(svg, 'line', { x1, y1, x2, y2, stroke: W, 'stroke-width': 1.5 });
  const dot = (x, y) => el(svg, 'circle', { cx: x, cy: y, r: 2.4, fill: W });
  const shape = (tag, a, w) => el(svg, tag, Object.assign({ fill: 'none', stroke: '#1a1a1a', 'stroke-width': w || 2 }, a));
  const lab = (x, y, s, cls, anchor) => el(svg, 'text', { x, y, class: 'sch ' + (cls || ''), 'text-anchor': anchor || 'middle', 'dominant-baseline': 'central' }, s);
  const rot = (x, y, s) => el(svg, 'text', { x, y, class: 'sch', 'text-anchor': 'middle', 'dominant-baseline': 'central', transform: `rotate(-90 ${x} ${y})` }, s);
  const gnd = (x, y) => shape('polygon', { points: `${x - 11},${y} ${x + 11},${y} ${x},${y + 10}` });
  const capV = (x, a, b, hw) => { shape('line', { x1: x - (hw || 12), x2: x + (hw || 12), y1: a, y2: a }, 2.6); shape('line', { x1: x - (hw || 12), x2: x + (hw || 12), y1: b, y2: b }, 2.6); };
  const capH = (a, b, y) => { shape('line', { x1: a, x2: a, y1: y - 12, y2: y + 12 }, 2.6); shape('line', { x1: b, x2: b, y1: y - 12, y2: y + 12 }, 2.6); };
  const res = (x, y, w, h) => { el(svg, 'rect', { x, y, width: w, height: h, fill: '#fff', stroke: '#1a1a1a', 'stroke-width': 2.4 }); };
  const coilH = (a, b, y) => {
    shape('path', { d: `M${a},${y}C${a + 9},${y - 8} ${b - 9},${y - 8} ${b},${y}` }, 1.7);
    const m = (a + b) / 2;
    [-10, 0, 10].forEach(o => shape('ellipse', { cx: m + o, cy: y + 1.5, rx: 5.3, ry: 6 }, 1.9));
  };
  const coilV = (x, a, b) => {
    shape('path', { d: `M${x},${a}C${x - 9},${a + 9} ${x - 9},${b - 9} ${x},${b}` }, 1.7);
    const m = (a + b) / 2;
    [-11, 0, 11].forEach(o => shape('ellipse', { cx: x + 2, cy: m + o, rx: 5.5, ry: 5.5 }, 1.9));
  };
  const speaker = (x, t, b, ct, cb, plusY, minusY, name, cls, ny) => {
    res(x - 3, t, 13, b - t);
    shape('polyline', { points: `${x + 10},${t + 3} ${x + 25},${ct} ${x + 25},${cb} ${x + 10},${b - 3}` }, 1.8);
    lab(x + 7, plusY, '+', '', 'middle');
    lab(x + 4, minusY, '-', '', 'middle');
    lab(538, ny, name, cls, 'start');
    ['X 0m', 'Y 0m', 'Z 0m'].forEach((s, i) => lab(538, ny + 15 + i * 15, s, '', 'start'));
  };

  /* bus and supply */
  wire(44, 218, 44, 805);
  wire(0, 218, 82, 218); wire(133, 218, 156, 218); wire(207, 218, 506, 218);
  [44, 70, 144, 219, 506].forEach(x => dot(x, 218));
  shape('circle', { cx: -5, cy: 257, r: 19 });
  shape('path', { d: 'M2,268C7,268 9,258 10,250' }, 1.6);
  lab(34, 228, '2.83V', '', 'end'); lab(17, 257, '0s', '', 'start'); lab(27, 284, '1mΩ', '', 'end');
  gnd(-1, 305);

  /* woofer branch */
  coilH(82, 133, 218); coilH(156, 207, 218);
  lab(106.5, 201, '3mH'); lab(181.6, 201, '3mH'); lab(91.5, 234, '234mΩ'); lab(166.5, 234, '234mΩ');
  [[144, '60µF', 122], [219, '30µF', 197]].forEach(([x, s, lx]) => {
    wire(x, 218, x, 250); wire(x, 260, x, 293); dot(x, 293); wire(x, 293, x, 305); capV(x, 250, 260); gnd(x, 305); rot(lx, 256, s);
  });
  wire(506, 218, 506, 239); wire(506, 272, 506, 305); dot(506, 293); gnd(506, 305);
  speaker(506, 239, 272, 228, 284, 231, 282, 'D3 Woofer', 'sch-d3', 227);

  /* notch on mid */
  wire(119, 380, 130, 380); wire(182, 380, 194, 380); wire(194, 380, 194, 393);
  dot(119, 380); dot(194, 380); res(130.6, 373, 51, 14); gnd(194, 393);
  lab(156, 363, '3Ω'); lab(143, 395, '5W');
  wire(119, 380, 119, 398); coilV(119, 398, 446); wire(119, 446, 119, 488); dot(119, 455);
  capV(119, 488, 497); wire(119, 497, 119, 530);
  rot(100, 416, '1mH'); rot(135, 434, '471mΩ'); rot(98, 493, '8.2µF');

  /* mid row */
  wire(44, 530, 55, 530); wire(107, 530, 150, 530); wire(161, 530, 225, 530); wire(236, 530, 282, 530); wire(332, 530, 356, 530); wire(407, 530, 506, 530);
  [44, 119, 194, 269, 344, 419, 506].forEach(x => dot(x, 530));
  res(55.5, 523, 51.5, 13.5); lab(82, 512.6, '4.3Ω'); lab(67, 546.7, '6.08W');
  capH(150, 161, 530); lab(156, 510.5, '36µF');
  capH(225, 236, 530); lab(231, 510.5, '7.5µF');
  coilH(282, 332, 530); coilH(356, 407, 530);
  lab(306, 512.6, '1.6mH'); lab(380, 512.6, '270µH'); lab(291, 546.7, '680mΩ'); lab(366, 546.7, '270mΩ');
  wire(194, 530, 194, 552); coilV(194, 552, 594); wire(194, 594, 194, 617); dot(194, 604.6); gnd(194, 617);
  rot(175, 568.4, '1.8mH'); rot(209, 583, '173mΩ');
  [[344, '4.7µF', 322], [419, '3µF', 397]].forEach(([x, s, lx]) => {
    wire(x, 530, x, 562); wire(x, 571.5, x, 617); dot(x, 604.6); capV(x, 562, 571.5); gnd(x, 617); rot(lx, 568.4, s);
  });
  wire(506, 530, 506, 552); wire(506, 583, 506, 617); dot(506, 604.6); gnd(506, 617);
  speaker(506, 552, 583, 541, 595, 542.6, 593, 'D2 Mid', 'sch-d2', 538.4);

  /* tweeter row */
  wire(44, 805, 55, 805); wire(107, 805, 150, 805); wire(161, 805, 225, 805); wire(236, 805, 506, 805);
  [44, 119, 194, 269, 344, 444, 506].forEach(x => dot(x, 805));
  res(55.5, 797.7, 51.5, 13.5); lab(82, 787.4, '4.7Ω'); lab(67, 820.5, '5W');
  capH(150, 161, 805); lab(156, 784.3, '3µF');
  capH(225, 236, 805); lab(231, 784.3, '1.8µF');
  [[194, 175, 209], [269, 250, 284]].forEach(([x, a, b]) => {
    wire(x, 805, x, 817); coilV(x, 817, 867); wire(x, 867, x, 891.8); dot(x, 879.4); gnd(x, 891.8);
    rot(a, 842, '100µH'); rot(b, 856.6, '77mΩ');
  });
  wire(344, 805, 344, 891.8); res(337, 816, 13, 51); dot(344, 879.4); gnd(344, 891.8);
  rot(324, 842, '1.8Ω'); rot(357, 856.6, '5W');
  wire(506, 805, 506, 826.7); wire(506, 857.7, 506, 891.8); dot(506, 879.4); gnd(506, 891.8);
  speaker(506, 826.7, 857.7, 815, 870, 867, 818.4, 'D1 Tweeter', 'sch-d1', 813);

  /* Zobel on tweeter */
  wire(444, 655, 455, 655); wire(506, 655, 518, 655); wire(518, 655, 518, 666.5);
  dot(444, 655); dot(518, 655); res(455, 648, 51, 13); gnd(518, 666.5);
  lab(481, 637.6, '5.6Ω'); lab(467, 670.7, '5W');
  wire(444, 655, 444, 686); capV(444, 686, 696.5); wire(444, 696.5, 444, 743); dot(444, 729.6);
  coilV(444, 743, 792.6); wire(444, 792.6, 444, 805);
  rot(422, 692.4, '680nF'); rot(424, 766.8, '270µH'); rot(458, 782, '220mΩ');
})();
```
